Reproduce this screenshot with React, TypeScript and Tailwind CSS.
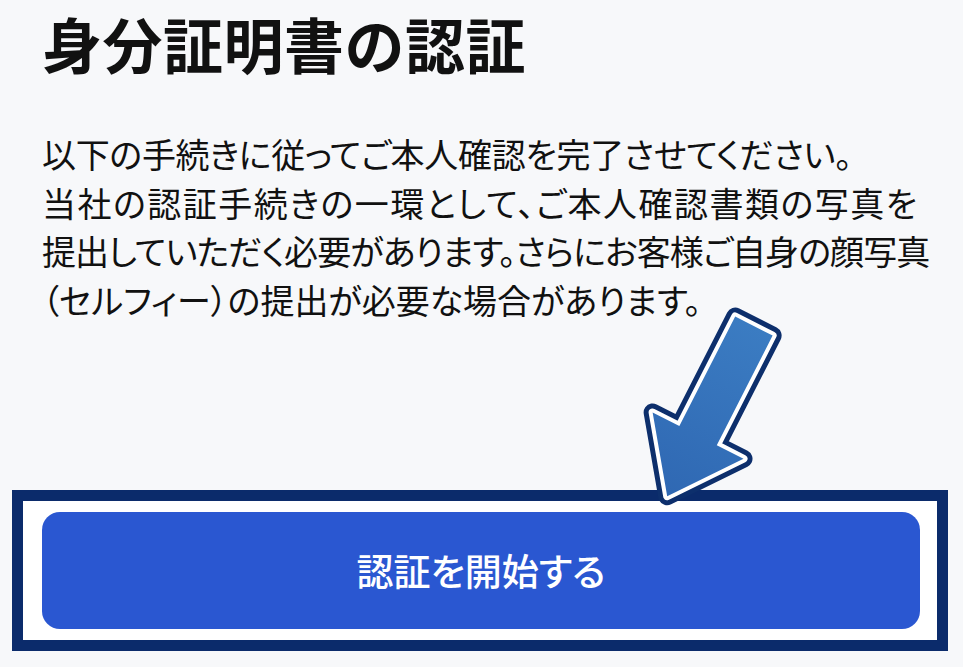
import React from "react";

const lines = [
  { text: "以下の手続きに従ってご本人確認を完了させてください。", track: "tracking-[-0.3px]" },
  { text: "当社の認証手続きの一環として、ご本人確認書類の写真を", track: "tracking-[1.5px]" },
  { text: "提出していただく必要があります。さらにお客様ご自身の顔写真", track: "tracking-[-0.9px]" },
  { text: "（セルフィー）の提出が必要な場合があります。", track: "tracking-[0px]" },
];

function PointerArrow() {
  const pts = "-21,9 21,9 21,132 51,132 0,200 -51,132 -21,132";
  return (
    <svg className="pointer-events-none absolute left-0 top-0" width="963" height="667" viewBox="0 0 963 667">
      <defs>
        <linearGradient id="arrowFill" x1="0" y1="0" x2="0" y2="1">
          <stop offset="0" stopColor="#3b7cc2" />
          <stop offset="1" stopColor="#2f68b3" />
        </linearGradient>
      </defs>
      <g transform="translate(758 318) rotate(27)">
        <polygon points={pts} fill="#0d2f6c" stroke="#0d2f6c" strokeWidth="18" strokeLinejoin="round" />
        <polygon points={pts} fill="none" stroke="#ffffff" strokeWidth="8" strokeLinejoin="round" />
        <polygon points={pts} fill="url(#arrowFill)" />
      </g>
    </svg>
  );
}

export default function App() {
  return (
    <div className="relative h-[667px] w-[963px] overflow-hidden bg-[#f7f8fa] font-['Noto_Sans_CJK_JP',sans-serif] text-[#111111]">
      <div className="px-[42px] pt-[13px]">
        <h1 className="whitespace-nowrap text-[60px] font-bold leading-none tracking-[0.5px]">身分証明書の認証</h1>
        <div className="mt-[57px] text-[34px] leading-[48.5px] [font-feature-settings:'palt']">
          {lines.map((l) => (
            <div key={l.text} className={"whitespace-nowrap " + l.track}>{l.text}</div>
          ))}
        </div>
      </div>

      <div className="ml-[12px] mr-[15px] mt-[166px] border-[11px] border-[#0b2b6b] bg-white pb-[11px] pl-[19px] pr-[17px] pt-[11px]">
        <button className="flex h-[117px] w-full items-center justify-center rounded-[18px] bg-[#2a57d1] text-[37px] font-medium text-white [font-feature-settings:'palt']">
          認証を開始する
        </button>
      </div>

      <PointerArrow />
    </div>
  );
}
